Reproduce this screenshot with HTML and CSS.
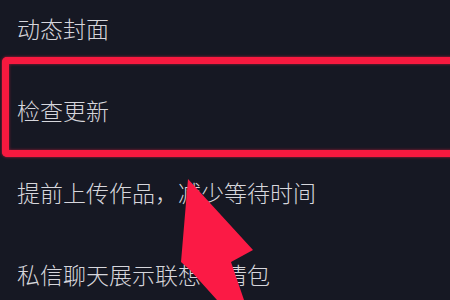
FILE: index.html
```html
<!DOCTYPE html>
<html lang="zh-CN">
<head>
<meta charset="utf-8">
<title>设置</title>
<link rel="stylesheet" href="styles.css">
</head>
<body>
<div class="screen">
  <ul class="settings">
    <li class="row">动态封面</li>
    <li class="row">检查更新</li>
    <li class="row">提前上传作品，减少等待时间</li>
    <li class="row">私信聊天展示联想表情包</li>
  </ul>
  <div class="highlight"></div>
  <svg class="arrow" width="450" height="300" viewBox="0 0 450 300">
    <polygon points="188,179 253,250 231,262 244,300 217,300 190,270 181,262" />
  </svg>
</div>
</body>
</html>
```
FILE: styles.css
```css
html, body {
  margin: 0;
  padding: 0;
  background: #161823;
  overflow: hidden;
}
.screen {
  position: relative;
  display: flow-root;
  width: 100vw;
  height: 100vh;
  overflow: hidden;
  background: #161823;
}
.settings {
  list-style: none;
  margin: -13px 0 0 0;
  padding: 0;
}
.row {
  height: 82px;
  display: flex;
  align-items: center;
  padding-left: 17px;
  font-family: "Noto Sans CJK SC", "Noto Sans", sans-serif;
  font-size: 23px;
  font-weight: 300;
  color: #d6d6dc;
}
.highlight {
  position: absolute;
  left: 2px;
  right: -30px;
  top: 57px;
  height: 100px;
  box-sizing: border-box;
  border: 7px solid #f7193f;
  border-right: none;
  border-radius: 5px 0 0 5px;
  box-shadow: 0 0 3px rgba(255, 30, 70, 0.7), inset 0 0 3px rgba(255, 30, 70, 0.6);
}
.arrow {
  position: absolute;
  left: 0;
  top: 0;
}
.arrow polygon {
  fill: #fb1a45;
}
```
